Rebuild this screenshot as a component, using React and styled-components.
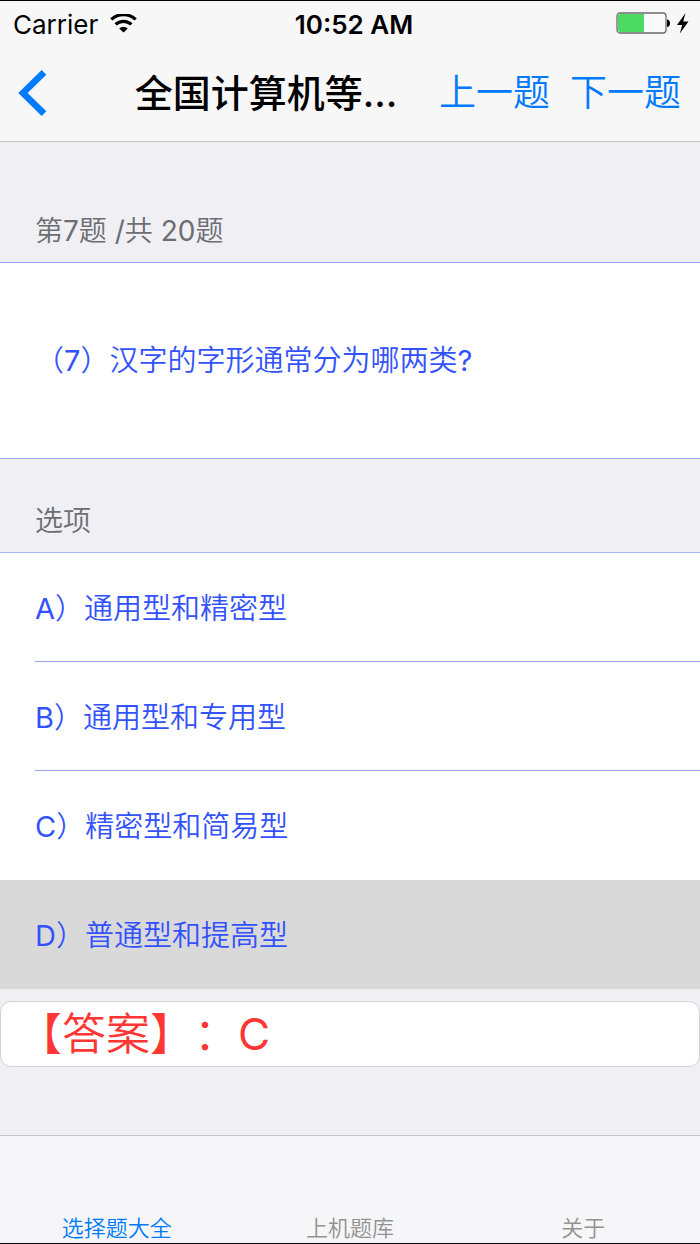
import { useState } from 'react'
import styled, { createGlobalStyle } from 'styled-components'

const GlobalStyle = createGlobalStyle`
  * {
    box-sizing: border-box;
  }

  body {
    margin: 0;
    background-color: #efeff4;
    font-family: Inter, 'Noto Sans CJK SC DemiLight', 'Noto Sans CJK SC', sans-serif;
    text-spacing-trim: space-all;
  }

  button, input {
    font-family: inherit;
    text-spacing-trim: inherit;
  }
`

const Screen = styled.div`
  min-height: 100vh;
  display: flex;
  flex-direction: column;
  border-top: 1px solid #000;
  border-bottom: 1px solid #000;
`

const TopBar = styled.header`
  background-color: #f7f7f8;
  border-bottom: 1px solid #c6c6c9;
`

const StatusBar = styled.div`
  display: grid;
  grid-template-columns: 1fr auto 1fr;
  align-items: center;
  height: 46px;
  padding: 0 11px 0 13px;
  font-size: 26px;
  color: #000;
`

const StatusSide = styled.div`
  display: flex;
  align-items: center;
  justify-content: ${(props) => (props.$end ? 'flex-end' : 'flex-start')};
  gap: 12px;
`

const Clock = styled.time`
  font-weight: 600;
  margin-left: 6px;
`

const NavBar = styled.nav`
  display: flex;
  align-items: center;
  height: 94px;
  padding: 0 19px 2px 18px;
`

const BackButton = styled.button`
  display: flex;
  padding: 0;
  border: none;
  background: none;
  cursor: pointer;
`

const Title = styled.h1`
  flex: 1;
  margin: 0;
  padding-left: 46px;
  text-align: center;
  font-family: Inter, 'Noto Sans CJK SC', sans-serif;
  font-size: 38px;
  font-weight: 500;
  line-height: 48px;
  white-space: nowrap;
  color: #000;
`

const NavActions = styled.div`
  display: flex;
  gap: 20px;
`

const NavButton = styled.button`
  padding: 0;
  border: none;
  background: none;
  color: #007aff;
  font-size: 37px;
  line-height: 48px;
  cursor: pointer;
`

const SectionHeader = styled.h2`
  display: flex;
  align-items: flex-end;
  height: ${(props) => (props.$first ? '120px' : '93px')};
  margin: 0;
  padding: 0 35px 11px;
  font-size: 28px;
  font-weight: 400;
  line-height: 40px;
  color: #6d6d72;
`

const Question = styled.p`
  display: flex;
  align-items: center;
  min-height: 197px;
  margin: 0;
  padding: 0 35px;
  background-color: #fff;
  border-top: 1px solid #99a5ff;
  border-bottom: 1px solid #99a5ff;
  font-size: 29px;
  line-height: 40px;
  color: #3352ff;
`

const OptionList = styled.ul`
  margin: 0;
  padding: 0;
  list-style: none;
  border-top: 1px solid #a9b3ff;
`

const OptionButton = styled.button`
  display: flex;
  width: 100%;
  height: 109px;
  padding: 0 0 0 35px;
  border: none;
  background-color: ${(props) => (props.$selected ? '#d9d9d9' : '#fff')};
  color: #3352ff;
  font-size: 29px;
  text-align: left;
  cursor: pointer;
`

const OptionLabel = styled.span`
  flex: 1;
  display: flex;
  align-items: center;
  align-self: stretch;
  padding-bottom: 3px;
  border-bottom: 1px solid ${(props) => (props.$divider ? '#99a5ff' : 'transparent')};
`

const Answer = styled.input`
  width: 100%;
  height: 66px;
  margin-top: 12px;
  padding: 0 17px 6px;
  border: 1px solid #d4d4d8;
  border-radius: 11px;
  background-color: #fff;
  color: #ff3633;
  font-size: 44px;
  outline: none;
`

const TabBar = styled.nav`
  display: grid;
  grid-template-columns: repeat(3, 1fr);
  height: 108px;
  margin-top: auto;
  background-color: #f6f6f8;
  border-top: 1px solid #c6c6c9;
`

const Tab = styled.a`
  display: flex;
  align-items: flex-end;
  justify-content: center;
  font-size: 22px;
  line-height: 30px;
  text-decoration: none;
  color: ${(props) => (props.$active ? '#007aff' : '#929292')};
`

const WifiIcon = () => (
  <svg width="27" height="20" viewBox="0 0 27 20" fill="none" stroke="#000" strokeWidth="3.2" aria-hidden="true">
    <path d="M1.3 5.4a18 18 0 0 1 24.4 0" />
    <path d="M5.6 10.4a11.6 11.6 0 0 1 15.8 0" />
    <path d="M13.5 18.6l-4.3-4.2a6.2 6.2 0 0 1 8.6 0z" fill="#000" stroke="none" />
  </svg>
)

const BatteryIcon = () => (
  <svg width="73" height="24" viewBox="0 0 73 24" aria-hidden="true">
    <rect x="1" y="1" width="49" height="20" rx="3" fill="#fff" fillOpacity="0.4" stroke="#6b6b6b" strokeWidth="1.3" />
    <path d="M4 2h24v18H4a2 2 0 0 1-2-2V4a2 2 0 0 1 2-2z" fill="#4cd964" />
    <path d="M51 7.5c4 0 4 7.5 0 7.5z" fill="#000" />
    <path d="M69.5 1L61 13h5.2L63.8 21.5 72.5 9.5h-5.3z" fill="#000" />
  </svg>
)

const BackIcon = () => (
  <svg width="29" height="46" viewBox="0 0 29 46" fill="none" stroke="#007aff" strokeWidth="6.6" aria-hidden="true">
    <path d="M26 2.4L5 23l21 20.6" />
  </svg>
)

const options = [
  { key: 'A', text: '通用型和精密型' },
  { key: 'B', text: '通用型和专用型' },
  { key: 'C', text: '精密型和简易型' },
  { key: 'D', text: '普通型和提高型' },
]

const tabs = ['选择题大全', '上机题库', '关于']

function App() {
  const [selected, setSelected] = useState(3)
  const [activeTab, setActiveTab] = useState(0)

  return (
    <Screen>
      <GlobalStyle />
      <TopBar>
        <StatusBar>
          <StatusSide>
            Carrier
            <WifiIcon />
          </StatusSide>
          <Clock>10:52 AM</Clock>
          <StatusSide $end>
            <BatteryIcon />
          </StatusSide>
        </StatusBar>
        <NavBar>
          <BackButton type="button" aria-label="返回">
            <BackIcon />
          </BackButton>
          <Title>全国计算机等…</Title>
          <NavActions>
            <NavButton type="button">上一题</NavButton>
            <NavButton type="button">下一题</NavButton>
          </NavActions>
        </NavBar>
      </TopBar>

      <main>
        <SectionHeader $first>第7题 /共 20题</SectionHeader>
        <Question>（7）汉字的字形通常分为哪两类?</Question>

        <SectionHeader>选项</SectionHeader>
        <OptionList>
          {options.map((option, i) => (
            <li key={option.key}>
              <OptionButton
                type="button"
                $selected={i === selected}
                aria-pressed={i === selected}
                onClick={() => setSelected(i)}
              >
                <OptionLabel
                  $divider={i !== selected && i + 1 !== selected && i < options.length - 1}
                >
                  {option.key}）{option.text}
                </OptionLabel>
              </OptionButton>
            </li>
          ))}
        </OptionList>

        <Answer type="text" aria-label="答案" value="【答案】：C" readOnly />
      </main>

      <TabBar>
        {tabs.map((tab, i) => (
          <Tab key={tab} href="#" $active={i === activeTab} onClick={() => setActiveTab(i)}>
            {tab}
          </Tab>
        ))}
      </TabBar>
    </Screen>
  )
}

export default App
